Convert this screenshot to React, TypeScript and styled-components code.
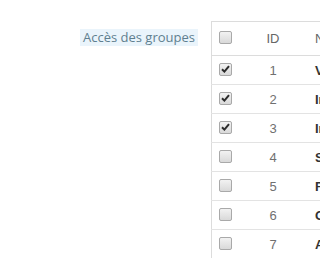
import React from "react"
import styled, { createGlobalStyle } from "styled-components"

const Global = createGlobalStyle`
body{
  margin:0;
  background:#fff;
  overflow:hidden;
}
`

type Group = { id: number; name: string; checked: boolean }

const groups: Group[] = [
  { id: 1, name: "Visiteur", checked: true },
  { id: 2, name: "Invité", checked: true },
  { id: 3, name: "Inscrit", checked: true },
  { id: 4, name: "Super admin", checked: false },
  { id: 5, name: "Fournisseur", checked: false },
  { id: 6, name: "Gestionnaire", checked: false },
  { id: 7, name: "Administrateur", checked: false },
]

const Box = ({ checked }: { checked?: boolean }) => (
  <SCheck>
    {checked && (
      <svg width="9" height="8" viewBox="0 0 9 8">
        <path d="M1 4.2 L3.4 6.6 L8 1.2" fill="none" stroke="#2b2b2b" strokeWidth="2" />
      </svg>
    )}
  </SCheck>
)

export default function App() {
  return (
    <>
      <Global />
      <SPage>
        <SLabelCol>
          <SLabel>Accès des groupes</SLabel>
        </SLabelCol>
        <STable>
          <thead>
            <tr>
              <SHeadCell><Box /></SHeadCell>
              <SHeadCell $center>ID</SHeadCell>
              <SHeadCell>Nom</SHeadCell>
            </tr>
          </thead>
          <tbody>
            {groups.map((g) => (
              <tr key={g.id}>
                <SCell><Box checked={g.checked} /></SCell>
                <SCell $center>{g.id}</SCell>
                <SName>{g.name}</SName>
              </tr>
            ))}
          </tbody>
        </STable>
      </SPage>
    </>
  )
}

const SPage = styled.div`
display:flex;
align-items:flex-start;
padding-top:21px;
width:320px;
height:237px;
overflow:hidden;
`
const SLabelCol = styled.div`
width:198px;
flex-shrink:0;
display:flex;
justify-content:flex-end;
padding-top:8px;
margin-right:13px;
`
const SLabel = styled.span`
font-family:"Open Sans",sans-serif;
font-size:13px;
line-height:17px;
color:#5f7f8f;
background:#eaf4fb;
padding:0 3px;
white-space:nowrap;
`
const STable = styled.table`
border-collapse:collapse;
border-left:1px solid #dcdcdc;
border-top:1px solid #dcdcdc;
font-family:"Liberation Sans",Arial,sans-serif;
font-size:13px;
line-height:15px;
flex-shrink:0;
`
const SHeadCell = styled.th<{ $center?: boolean }>`
height:33px;
padding:0 0 0 7px;
vertical-align:middle;
text-align:${(p) => (p.$center ? "center" : "left")};
font-weight:normal;
color:#666;
border-bottom:1px solid #dcdcdc;
white-space:nowrap;
&:first-child{width:27px;}
&:nth-child(2){width:54px;padding:0;}
&:nth-child(3){padding-left:15px;}
`
const SCell = styled.td<{ $center?: boolean }>`
height:28px;
padding:0 0 0 7px;
vertical-align:middle;
text-align:${(p) => (p.$center ? "center" : "left")};
color:#707070;
border-bottom:1px solid #e3e3e3;
&:first-child{width:27px;}
&:nth-child(2){padding:0;}
`
const SName = styled.td`
height:28px;
padding:0 0 0 15px;
vertical-align:middle;
font-weight:bold;
color:#333;
white-space:nowrap;
border-bottom:1px solid #e3e3e3;
`
const SCheck = styled.span`
display:flex;
align-items:center;
justify-content:center;
width:11px;
height:11px;
margin-top:-2px;
border:1px solid #a9a9a9;
border-radius:2px;
background:linear-gradient(#f2f2f2,#d9d9d9);
`
